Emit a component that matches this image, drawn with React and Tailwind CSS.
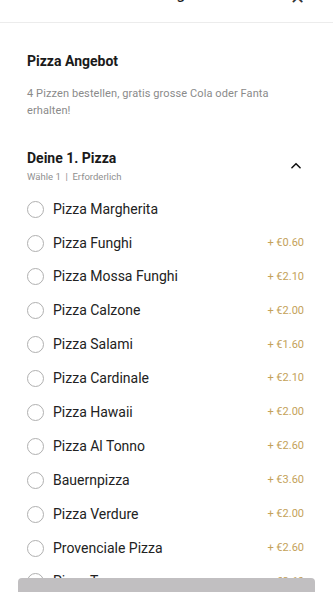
const pizzas = [
    { name: 'Pizza Margherita', price: null },
    { name: 'Pizza Funghi', price: '+ €0.60' },
    { name: 'Pizza Mossa Funghi', price: '+ €2.10' },
    { name: 'Pizza Calzone', price: '+ €2.00' },
    { name: 'Pizza Salami', price: '+ €1.60' },
    { name: 'Pizza Cardinale', price: '+ €2.10' },
    { name: 'Pizza Hawaii', price: '+ €2.00' },
    { name: 'Pizza Al Tonno', price: '+ €2.60' },
    { name: 'Bauernpizza', price: '+ €3.60' },
    { name: 'Pizza Verdure', price: '+ €2.00' },
    { name: 'Provenciale Pizza', price: '+ €2.60' },
    { name: 'Pizza Tonno', price: '+ €2.60' },
];

export default function App() {
    return (
        <div
            className="relative h-[592px] w-[333px] overflow-hidden bg-white text-[#1a1a1a]"
            style={{ fontFamily: 'Roboto, "Noto Sans", sans-serif' }}
        >
            {/* header, scrolled partly out of view */}
            <div className="-mt-[34px] flex h-[57px] items-center justify-center border-b border-[#ececec] relative">
                <span className="text-[15px] font-medium">Pizza Angebot</span>
                <span className="absolute right-[28px] top-[18px] text-[18px] text-[#333]">✕</span>
            </div>

            <div className="px-[27px]">
                <h2 className="mt-[29px] text-[14px] font-bold leading-[18px]">Pizza Angebot</h2>
                <p className="mt-[15px] pr-[20px] text-[11px] leading-[17px] tracking-[0.1px] text-[#8a8a8a]">
                    4 Pizzen bestellen, gratis grosse Cola oder Fanta erhalten!
                </p>

                <div className="mt-[30px] flex items-start justify-between">
                    <div>
                        <h3 className="text-[14px] font-bold leading-[18px]">Deine 1. Pizza</h3>
                        <div className="mt-[3px] text-[9.5px] text-[#8f8f8f]">Wähle 1&nbsp; |&nbsp; Erforderlich</div>
                    </div>
                    <svg className="mr-[3px] mt-[10px] h-[14px] w-[14px]" viewBox="0 0 24 24" fill="none" stroke="#111" strokeWidth="2.6" strokeLinecap="round" strokeLinejoin="round">
                        <path d="M5 15l7-7 7 7" />
                    </svg>
                </div>

                <ul className="mt-[8px]">
                    {pizzas.map((p) => (
                        <li key={p.name} className="flex h-[33.9px] items-center">
                            <span className="h-[17px] w-[17px] shrink-0 rounded-full border border-[#b0b0b0]" />
                            <span className="ml-[9px] flex-1 text-[14px] text-[#222]">{p.name}</span>
                            {p.price && (
                                <span className="mr-[2px] text-[11px] text-[#c4a25a]">{p.price}</span>
                            )}
                        </li>
                    ))}
                </ul>
            </div>

            <div className="absolute bottom-[-10px] left-[18px] right-[18px] h-[24px] rounded-[4px] bg-[#c1bfc1]" />
        </div>
    );
}
